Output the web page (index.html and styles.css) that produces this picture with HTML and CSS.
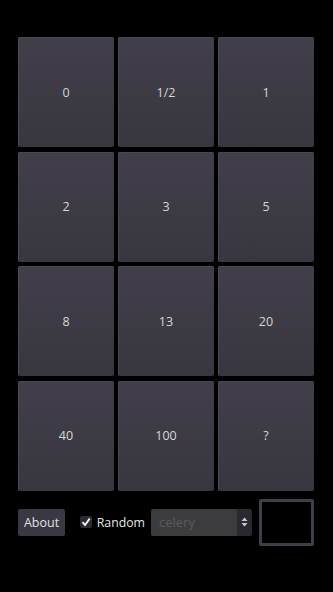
FILE: index.html
```html
<!DOCTYPE html>
<html>
<head>
    <title>Planning Poker</title>
    <link rel="stylesheet" href="styles.css">
</head>
<body>

    <div class="board">
        <div class="card-grid">
            <button class="card">0</button>
            <button class="card">1/2</button>
            <button class="card">1</button>
            <button class="card">2</button>
            <button class="card">3</button>
            <button class="card">5</button>
            <button class="card">8</button>
            <button class="card">13</button>
            <button class="card">20</button>
            <button class="card">40</button>
            <button class="card">100</button>
            <button class="card">?</button>
        </div>

        <div class="toolbar">
            <button class="about-btn">About</button>

            <label class="random">
                <span class="check">
                    <svg width="10" height="10" viewBox="0 0 10 10">
                        <path d="M1.5 5.2 L4 8 L8.7 1.6" fill="none" stroke="#f2f2f2" stroke-width="1.9"/>
                    </svg>
                </span>
                Random
            </label>

            <div class="deck-select">
                <span class="deck-name">celery</span>
                <span class="deck-arrows">
                    <svg width="7" height="10" viewBox="0 0 7 10">
                        <path d="M3.5 0.5 L6.5 4 L0.5 4 Z" fill="#c8c8cc"/>
                        <path d="M3.5 9.5 L6.5 6 L0.5 6 Z" fill="#c8c8cc"/>
                    </svg>
                </span>
            </div>

            <div class="preview"></div>
        </div>
    </div>

</body>
</html>
```

FILE: styles.css
```css
body {
    background-color: #000;
    margin: 0;
    font-family: "Open Sans", Arial, sans-serif;
}

.board {
    padding: 37px 0 0 18px;
}

.card-grid {
    display: grid;
    grid-template-columns: repeat(3, 96px);
    grid-auto-rows: 110px;
    column-gap: 4px;
    row-gap: 4.67px;
}

.card {
    background: linear-gradient(#423f4a, #38363f);
    color: #d6d6d8;
    font-family: "Open Sans", Arial, sans-serif;
    font-size: 12.5px;
    border: none;
    border-radius: 2px;
    box-shadow: inset 1px 1px 0 #4a4853;
    padding: 0;
    cursor: pointer;
}

.toolbar {
    display: flex;
    align-items: center;
    margin-top: 8px;
}

.about-btn {
    width: 47px;
    height: 27px;
    background-color: #3a3843;
    color: #e0e0e2;
    font-family: "Open Sans", Arial, sans-serif;
    font-size: 12.5px;
    border: none;
    border-radius: 2px;
    padding: 0;
    margin-right: 15px;
}

.random {
    display: flex;
    align-items: center;
    gap: 5px;
    width: 65px;
    color: #e4e4e6;
    font-size: 12.3px;
    margin-right: 6px;
}

.check {
    width: 12px;
    height: 12px;
    background-color: #2c2b33;
    border-radius: 2px;
    display: flex;
    align-items: center;
    justify-content: center;
}

.deck-select {
    display: flex;
    width: 101px;
    height: 27px;
    border-radius: 2px;
    overflow: hidden;
    margin-right: 7px;
}

.deck-name {
    flex: 1;
    background-color: #3c3c3e;
    color: #5a5a5e;
    font-size: 13px;
    line-height: 27px;
    padding-left: 8px;
}

.deck-arrows {
    width: 15px;
    background-color: #2a2930;
    display: flex;
    align-items: center;
    justify-content: center;
}

.preview {
    width: 49px;
    height: 41px;
    border: 3px solid #403e48;
    border-radius: 2px;
    background-color: #000;
}
```
